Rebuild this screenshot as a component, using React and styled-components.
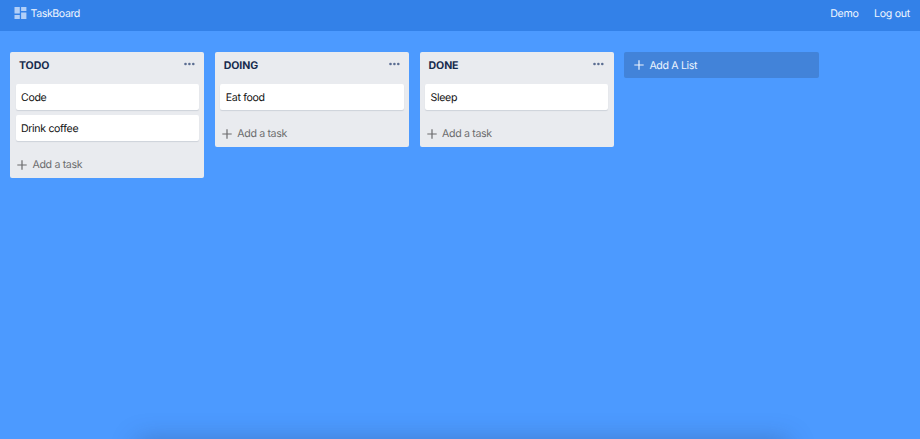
import React from "react";
import styled, { createGlobalStyle } from "styled-components";

const GlobalStyle = createGlobalStyle`
  *, *::before, *::after { box-sizing: border-box; }
  html, body { margin: 0; height: 100%; background: #4c9aff; }
  body, button {
    font-family: Inter, "Liberation Sans", sans-serif;
    font-size: 10.6px;
    line-height: 16px;
    letter-spacing: -0.34px;
    text-rendering: geometricPrecision;
  }
  button { border: 0; background: none; padding: 0; color: inherit; cursor: pointer; }
  svg { display: block; flex: none; }
`;

const Page = styled.div`
  position: relative;
  display: flex;
  flex-direction: column;
  height: 100vh;
  overflow: hidden;
  background: #4c9aff;
`;

const Header = styled.header`
  display: flex;
  justify-content: space-between;
  align-items: flex-start;
  height: 31px;
  padding: 6px 10px 0 13.5px;
  background: #3381e8;
  color: #f0f6ff;
`;

const Brand = styled.div`
  display: flex;
  align-items: flex-start;
  gap: 4px;
  letter-spacing: -0.4px;
`;

const Nav = styled.nav`
  display: flex;
  gap: 15.5px;
`;

const NavItem = styled.button`
  white-space: nowrap;
  letter-spacing: -0.28px;
`;

const Board = styled.main`
  display: flex;
  align-items: flex-start;
  gap: 10.5px;
  padding: 21px 10px;
`;

const List = styled.section`
  flex: none;
  width: 194.3px;
  padding: 6px 5.5px 5px;
  border-radius: 2px;
  background: #e9ebef;
`;

const ListHeader = styled.div`
  display: flex;
  justify-content: space-between;
  align-items: flex-start;
  height: 25.5px;
  padding: 0 4px 0 3.5px;
`;

const Title = styled.h2`
  margin: 0;
  font-size: 10.6px;
  line-height: 16px;
  font-weight: 700;
  letter-spacing: -0.12px;
  color: #172b4d;
`;

const MenuButton = styled.button`
  padding-top: 4px;
`;

const Cards = styled.div`
  display: flex;
  flex-direction: column;
  gap: 5px;
`;

const Card = styled.div`
  height: 26px;
  padding: 6px 5.5px 4px;
  border-radius: 2px;
  background: #fff;
  box-shadow: 0 1px 1px rgba(9, 30, 66, 0.12);
  color: #111;
`;

const AddTask = styled.button`
  display: flex;
  align-items: center;
  gap: 5.5px;
  margin-top: 16px;
  padding: 0 0 0 1.5px;
  letter-spacing: -0.34px;
  color: #6b6b6d;
`;

const AddList = styled.button`
  display: flex;
  align-items: center;
  gap: 5.5px;
  flex: none;
  width: 194.6px;
  height: 26px;
  padding: 0 0 0 9.5px;
  border-radius: 2px;
  background: #4283d9;
  color: #edf4fe;
`;

const AddListLabel = styled.span`
  padding-top: 1px;
`;

const BottomShade = styled.div`
  position: absolute;
  left: 142px;
  right: 136px;
  top: 100%;
  height: 20px;
  box-shadow: 0 6px 26px 4px rgba(40, 60, 100, 0.36);
`;

const Logo = () => (
  <svg width="13" height="14" viewBox="0 0 13 14" fill="#b1cff8">
    <path d="M.5 1h5.3v6.4H.5zM7.1 1h5.3v4.1H7.1zM.5 8.9h5.3V13H.5zM7.1 6.6h5.3V13H7.1z" />
  </svg>
);

const Plus = () => (
  <svg width="10" height="10" viewBox="0 0 10 10" fill="none" stroke="currentColor" strokeWidth="1.2">
    <path d="M5 .3v9.4M.3 5h9.4" />
  </svg>
);

const Dots = () => (
  <svg width="11" height="4" viewBox="0 0 11 4" fill="#5a6d91">
    <circle cx="1.5" cy="2" r="1.3" />
    <circle cx="5.4" cy="2" r="1.3" />
    <circle cx="9.3" cy="2" r="1.3" />
  </svg>
);

const lists = [
  { title: "TODO", tasks: ["Code", "Drink coffee"] },
  { title: "DOING", tasks: ["Eat food"] },
  { title: "DONE", tasks: ["Sleep"] },
];

export default function App() {
  return (
    <Page>
      <GlobalStyle />
      <Header>
        <Brand>
          <Logo />
          <span>TaskBoard</span>
        </Brand>
        <Nav>
          <NavItem>Demo</NavItem>
          <NavItem>Log out</NavItem>
        </Nav>
      </Header>
      <Board>
        {lists.map((list) => (
          <List key={list.title}>
            <ListHeader>
              <Title>{list.title}</Title>
              <MenuButton aria-label="List menu">
                <Dots />
              </MenuButton>
            </ListHeader>
            <Cards>
              {list.tasks.map((task) => (
                <Card key={task}>{task}</Card>
              ))}
            </Cards>
            <AddTask>
              <Plus />
              <span>Add a task</span>
            </AddTask>
          </List>
        ))}
        <AddList>
          <Plus />
          <AddListLabel>Add A List</AddListLabel>
        </AddList>
      </Board>
      <BottomShade />
    </Page>
  );
}
